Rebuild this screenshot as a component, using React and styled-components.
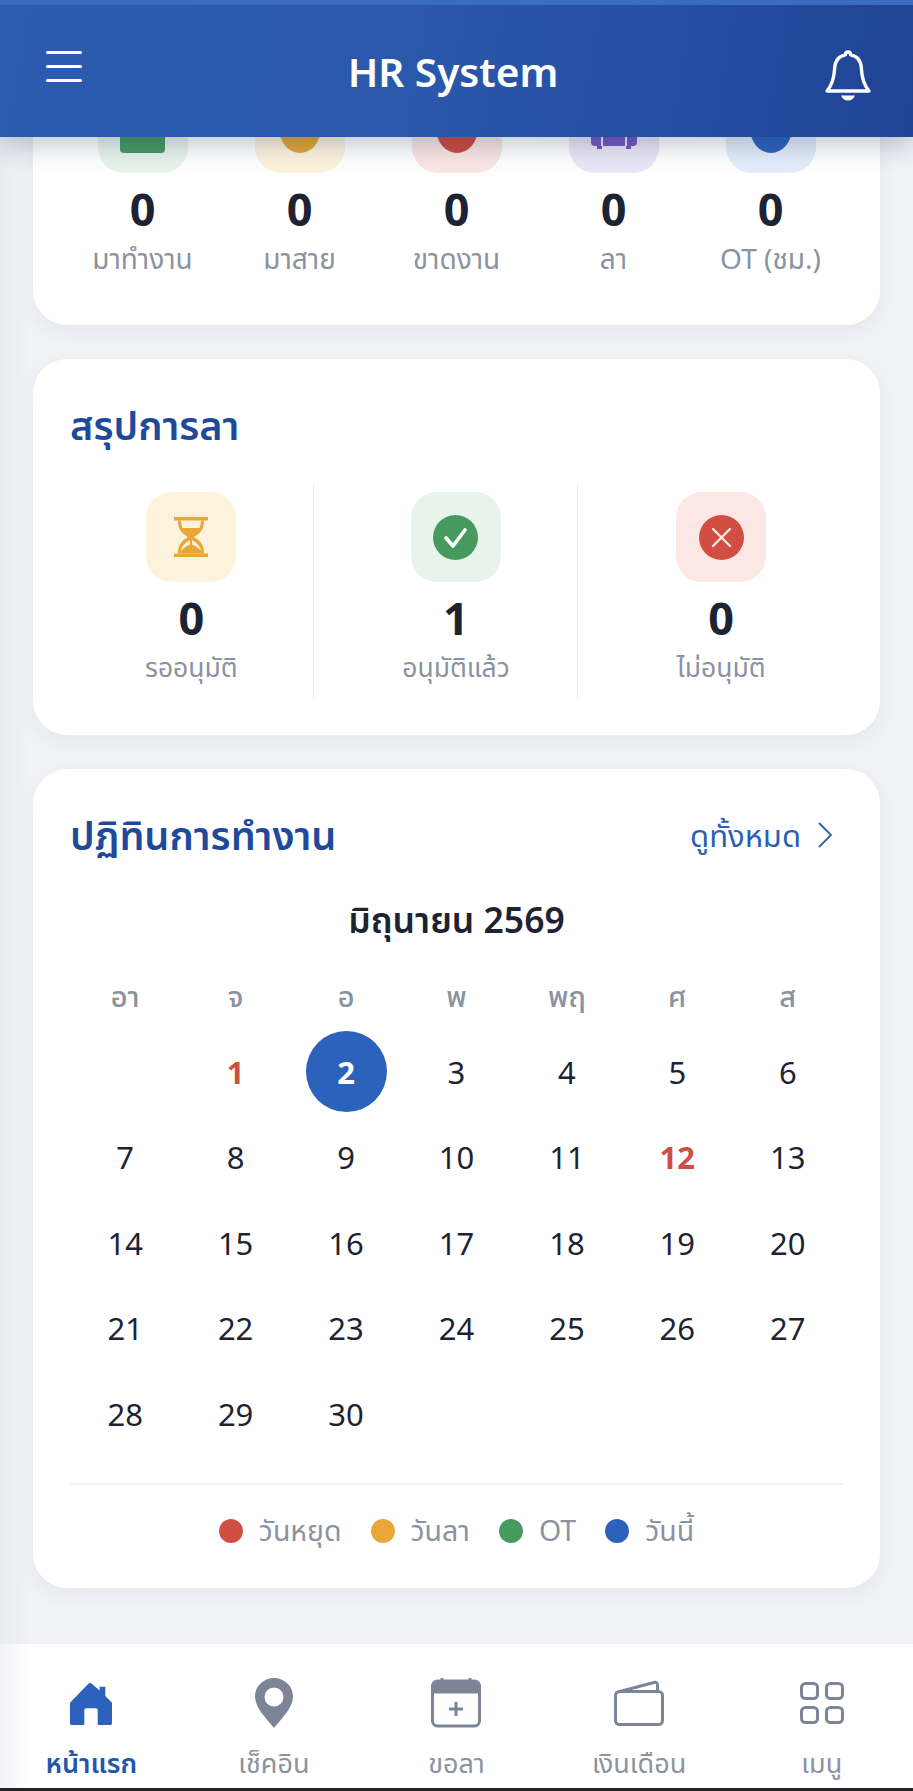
import React from 'react';
import styled, { createGlobalStyle } from 'styled-components';

const Global = createGlobalStyle`
  html, body { margin: 0; padding: 0; background: #eff1f5; }
  * { box-sizing: border-box; }
  body { font-family: "Noto Sans", "Noto Sans Thai", "Open Sans", sans-serif; }
`;

const Screen = styled.div`
  width: 913px; height: 1791px; display: flex; flex-direction: column; overflow: hidden;
  background: linear-gradient(90deg, #e9ebef 0, #f0f2f6 30px, #f0f2f6 100%);
`;
const Header = styled.header`
  position: relative; z-index: 2; flex: none; height: 137px; display: flex; align-items: center;
  justify-content: space-between; padding: 8px 41px 0 46px;
  background: linear-gradient(100deg, #2b5cb0 0%, #2a58ab 45%, #204496 100%);
  border-top: 5px solid #3a6cc0;
  box-shadow: 0 8px 24px rgba(30, 50, 90, .28);
`;
const Burger = styled.div`
  display: flex; flex-direction: column; gap: 11px; width: 36px; margin-top: -17px;
  span { display: block; height: 3px; background: #fff; border-radius: 2px; }
`;
const AppTitle = styled.h1`
  margin: 0 0 5px; font-size: 40.5px; line-height: 1.2; font-weight: 600; color: #fff;
`;
const Scroll = styled.main`
  flex: 1; min-height: 0; overflow: hidden; padding: 0 33px; display: flex; flex-direction: column; gap: 34px;
`;
const Card = styled.section`
  flex: none; background: #fff; border-radius: 34px; box-shadow: 0 6px 20px rgba(40, 55, 90, .06);
`;
const TopCard = styled(Card)`
  margin-top: -54px; height: 242px; padding: 0 31px; display: grid; grid-template-columns: repeat(5, 1fr);
`;
const LeaveCard = styled(Card)`
  height: 376px; padding: 32px 37px 0;
`;
const CalendarCard = styled(Card)`
  height: 819px; padding: 32px 37px 0;
`;
const Stat = styled.div`
  display: flex; flex-direction: column; align-items: center;
`;
const Tile = styled.div`
  width: 90px; height: 90px; border-radius: 26px; background: ${p => p.$bg};
  display: flex; align-items: center; justify-content: center; flex: none;
`;
const Num = styled.div`
  font-size: 45px; line-height: 56px; font-weight: 700; color: #1d2333; margin-top: 8px;
`;
const Label = styled.div`
  font-size: ${p => p.$size || 28}px; line-height: 36px; color: #8b92a0; margin-top: 3px;
`;
const CardTitle = styled.h2`
  margin: 0; font-size: 39.6px; line-height: 68px; font-weight: 600; color: #1f4a9a;
`;
const LeaveGrid = styled.div`
  display: grid; grid-template-columns: repeat(3, 1fr); column-gap: 21px; margin-top: 23px;
`;
const LeaveCell = styled(Stat)`
  padding-top: 10px; height: 216px;
  &:not(:last-child) { border-right: 1px solid #eef0f3; }
`;
const HeadRow = styled.div`
  display: flex; justify-content: space-between; align-items: center;
`;
const More = styled.div`
  display: flex; align-items: center; gap: 16px; color: #2c5fb3; font-size: 31px; font-weight: 400; line-height: 68px; padding-right: 10px;
`;
const Month = styled.div`
  text-align: center; font-size: 35.5px; line-height: 54px; font-weight: 600; color: #1d2333; margin-top: 23px;
`;
const Week = styled.div`
  display: grid; grid-template-columns: repeat(7, 1fr); margin-top: 28px;
`;
const Wd = styled.div`
  text-align: center; font-size: 29px; line-height: 44px; font-weight: 500; color: #8b92a0;
`;
const Days = styled.div`
  display: grid; grid-template-columns: repeat(7, 1fr); grid-auto-rows: 85.5px; margin-top: 11px;
`;
const DayCell = styled.div`
  display: flex; align-items: center; justify-content: center;
`;
const Day = styled.span`
  width: 81px; height: 81px; border-radius: 50%; display: flex; align-items: center; justify-content: center;
  font-size: 31px; font-weight: ${p => (p.$today || p.$holiday ? 700 : 400)};
  color: ${p => (p.$today ? '#fff' : p.$holiday ? '#cf4f45' : '#1d2333')};
  background: ${p => (p.$today ? '#2c62bb' : 'transparent')};
`;
const Legend = styled.div`
  margin-top: 26px; border-top: 2px solid #f1f2f4; padding-top: 23px; display: flex; justify-content: center; gap: 29px;
`;
const LegendItem = styled.div`
  display: flex; align-items: center; gap: 16px; font-size: 28.5px; line-height: 44px; color: #8b92a0;
`;
const Dot = styled.i`
  width: 24px; height: 24px; border-radius: 50%; background: ${p => p.$c}; display: block; margin-top: 2px;
`;
const Nav = styled.nav`
  flex: none; height: 147px; background: linear-gradient(90deg, #f2f3f5 0, #fff 30px); display: grid; grid-template-columns: repeat(5, 1fr);
  border-bottom: 3px solid #22242a;
`;
const NavItem = styled.div`
  display: flex; flex-direction: column; align-items: center; padding-top: 32px;
  color: ${p => (p.$active ? '#2c62bb' : '#7c8597')};
`;
const NavIcon = styled.div`
  height: 54px; display: flex; align-items: center; justify-content: center;
`;
const NavLabel = styled.div`
  margin-top: 15px; font-size: 27px; line-height: 36px; font-weight: ${p => (p.$active ? 600 : 400)};
  color: ${p => (p.$active ? '#2456aa' : '#8b92a0')};
`;

const Bell = () => (
  <svg width="48" height="54" viewBox="0 0 48 54" fill="none" stroke="#fff" strokeWidth="3.4" strokeLinejoin="round" strokeLinecap="round">
    <path d="M24 4c-1.6 0-2.6 1.200-2.600 2.800C13.500 8.200 11 13.500 10.600 20.500 10.200 29 9 36 3 43h42c-6-7-7.200-14-7.600-22.500C37 13.500 34.500 8.200 26.600 6.800 26.600 5.200 25.600 4 24 4z" />
    <path d="M17 47.500h14c-1 3-4 5-7 5s-6-2-7-5z" fill="#fff" stroke="none" />
  </svg>
);
const CalCheck = () => (
  <svg width="45" height="50" viewBox="0 0 45 50"><rect x="0" y="0" width="45" height="50" rx="4" fill="#479a5e" /><path d="M16 17l5 5 8-9" stroke="#fff" strokeWidth="3" fill="none" /></svg>
);
const Circle = ({ c }) => <svg width="42" height="50" viewBox="0 0 42 50"><ellipse cx="21" cy="25" rx="21" ry="25" fill={c} /></svg>;
const Case = () => (
  <svg width="46" height="50" viewBox="0 0 46 50">
    <rect x="0" y="0" width="46" height="43" rx="4" fill="#7556bf" />
    <path d="M11 28v15M35 28v15" stroke="#ede8f7" strokeWidth="2" />
    <path d="M6 43h5v3H6zM35 43h5v3h-5z" fill="#7556bf" />
  </svg>
);
const Hourglass = () => (
  <svg width="34" height="40" viewBox="0 0 34 40" fill="#eaa737">
    <rect x="0" y="0" width="34" height="3.500" />
    <rect x="0" y="36.500" width="34" height="3.500" />
    <path fillRule="evenodd" d="M4 3.500h26c0 8-2.500 12-10 16.500 7.500 4.500 10 8.500 10 16.500H4c0-8 2.500-12 10-16.500C6.500 15.500 4 11.500 4 3.500zM7 3.500c0 2.500.5 5 1.500 7.500h17c1-2.500 1.500-5 1.500-7.500zM16 23c-5 3-8.500 6.500-9 11 2-2.500 5-5 9-6.500zM18 23v4.500c4 1.500 7 4 9 6.500-.5-4.500-4-8-9-11z" />
  </svg>
);
const Check = () => (
  <svg width="45" height="45" viewBox="0 0 45 45"><circle cx="22.500" cy="22.500" r="22.500" fill="#479a5e" /><path d="M13 23l7 8 12-16" stroke="#fff" strokeWidth="3.600" fill="none" strokeLinecap="round" strokeLinejoin="round" /></svg>
);
const Cross = () => (
  <svg width="45" height="45" viewBox="0 0 45 45"><circle cx="22.500" cy="22.500" r="22.500" fill="#d24e43" /><path d="M14 14l17 17M31 14L14 31" stroke="#fde9e6" strokeWidth="2.400" strokeLinecap="round" /></svg>
);
const Chevron = () => (
  <svg width="16" height="28" viewBox="0 0 16 28" fill="none" stroke="#2c5fb3" strokeWidth="1.800"><path d="M2 2l12 12L2 26" /></svg>
);
const HomeIcon = () => (
  <svg width="42" height="43" viewBox="0 0 44 46" preserveAspectRatio="none" fill="currentColor">
    <path d="M21 1c.5 0 1 .2 1.500.6L31 9V5h6v10l6 6c.5.5 1 1 1 2v21c0 1-.6 2-2 2H29V30c0-1-.6-2-2-2H17c-1.400 0-2 1-2 2v16H2c-1.400 0-2-1-2-2V23c0-1 .5-1.500 1-2L19.500 1.600C20 1.200 20.500 1 21 1z" />
  </svg>
);
const PinIcon = () => (
  <svg width="38" height="50" viewBox="0 0 38 50" fill="currentColor">
    <path fillRule="evenodd" d="M19 0C8.500 0 0 8.200 0 18.500 0 30 12 41 19 50c7-9 19-20 19-31.500C38 8.200 29.500 0 19 0zm0 9.500a9.500 9.500 0 1 1 0 19 9.500 9.500 0 0 1 0-19z" />
  </svg>
);
const LeaveIcon = () => (
  <svg width="50" height="50" viewBox="0 0 50 50" fill="none" stroke="currentColor" strokeWidth="3">
    <path d="M1.500 14V8a5 5 0 0 1 5-5h37a5 5 0 0 1 5 5v6z" fill="currentColor" />
    <path d="M1.500 14v29a5 5 0 0 0 5 5h37a5 5 0 0 0 5-5V14" />
    <path d="M11 0v4M39 0v4" />
    <path d="M18 31h14M25 24v14" strokeWidth="3" />
  </svg>
);
const WalletIcon = () => (
  <svg width="50" height="46" viewBox="0 0 50 46" fill="none" stroke="currentColor" strokeWidth="3" strokeLinejoin="round">
    <path d="M4 12L40 2.500c2-.5 3.500.5 3.500 2.500v7" />
    <rect x="1.500" y="11.500" width="47" height="33" rx="4" />
  </svg>
);
const GridIcon = () => (
  <svg width="44" height="42" viewBox="0 0 44 42" fill="none" stroke="currentColor" strokeWidth="3">
    <rect x="1.500" y="1.500" width="16" height="15" rx="4" /><rect x="26.500" y="1.500" width="16" height="15" rx="4" />
    <rect x="1.500" y="25.500" width="16" height="15" rx="4" /><rect x="26.500" y="25.500" width="16" height="15" rx="4" />
  </svg>
);

const top = [
  ['#e8f3ec', <CalCheck />, 'มาทำงาน'], ['#fdf3dc', <Circle c="#e3a437" />, 'มาสาย'], ['#fae6e3', <Circle c="#cd4a40" />, 'ขาดงาน'],
  ['#ebe6f6', <Case />, 'ลา'], ['#e3ecfa', <Circle c="#2c62bb" />, 'OT (ชม.)'],
];
const leave = [
  ['#fdf3dc', <Hourglass />, '0', 'รออนุมัติ'], ['#e8f3ec', <Check />, '1', 'อนุมัติแล้ว'], ['#fbe8e5', <Cross />, '0', 'ไม่อนุมัติ'],
];
const weekdays = ['อา', 'จ', 'อ', 'พ', 'พฤ', 'ศ', 'ส'];
const cells = [null, ...Array.from({ length: 30 }, (_, i) => i + 1)];
const legend = [['#d24e43', 'วันหยุด'], ['#eaa737', 'วันลา'], ['#479a5e', 'OT'], ['#2c62bb', 'วันนี้']];
const nav = [
  [<HomeIcon />, 'หน้าแรก', true], [<PinIcon />, 'เช็คอิน'], [<LeaveIcon />, 'ขอลา'], [<WalletIcon />, 'เงินเดือน'], [<GridIcon />, 'เมนู'],
];

export default function App() {
  return (
    <Screen>
      <Global />
      <Header>
        <Burger><span /><span /><span /></Burger>
        <AppTitle>HR System</AppTitle>
        <Bell />
      </Header>
      <Scroll>
        <TopCard>
          {top.map(([bg, icon, label]) => (
            <Stat key={label}>
              <Tile $bg={bg}>{icon}</Tile>
              <Num>0</Num>
              <Label>{label}</Label>
            </Stat>
          ))}
        </TopCard>
        <LeaveCard>
          <CardTitle>สรุปการลา</CardTitle>
          <LeaveGrid>
            {leave.map(([bg, icon, n, label]) => (
              <LeaveCell key={label}>
                <Tile $bg={bg}>{icon}</Tile>
                <Num>{n}</Num>
                <Label $size={26.5}>{label}</Label>
              </LeaveCell>
            ))}
          </LeaveGrid>
        </LeaveCard>
        <CalendarCard>
          <HeadRow>
            <CardTitle>ปฏิทินการทำงาน</CardTitle>
            <More>ดูทั้งหมด <Chevron /></More>
          </HeadRow>
          <Month>มิถุนายน 2569</Month>
          <Week>{weekdays.map(d => <Wd key={d}>{d}</Wd>)}</Week>
          <Days>
            {cells.map((d, i) => (
              <DayCell key={i}>
                {d && <Day $today={d === 2} $holiday={d === 1 || d === 12}>{d}</Day>}
              </DayCell>
            ))}
          </Days>
          <Legend>
            {legend.map(([c, t]) => <LegendItem key={t}><Dot $c={c} />{t}</LegendItem>)}
          </Legend>
        </CalendarCard>
      </Scroll>
      <Nav>
        {nav.map(([icon, label, active]) => (
          <NavItem key={label} $active={active}>
            <NavIcon>{icon}</NavIcon>
            <NavLabel $active={active}>{label}</NavLabel>
          </NavItem>
        ))}
      </Nav>
    </Screen>
  );
}
